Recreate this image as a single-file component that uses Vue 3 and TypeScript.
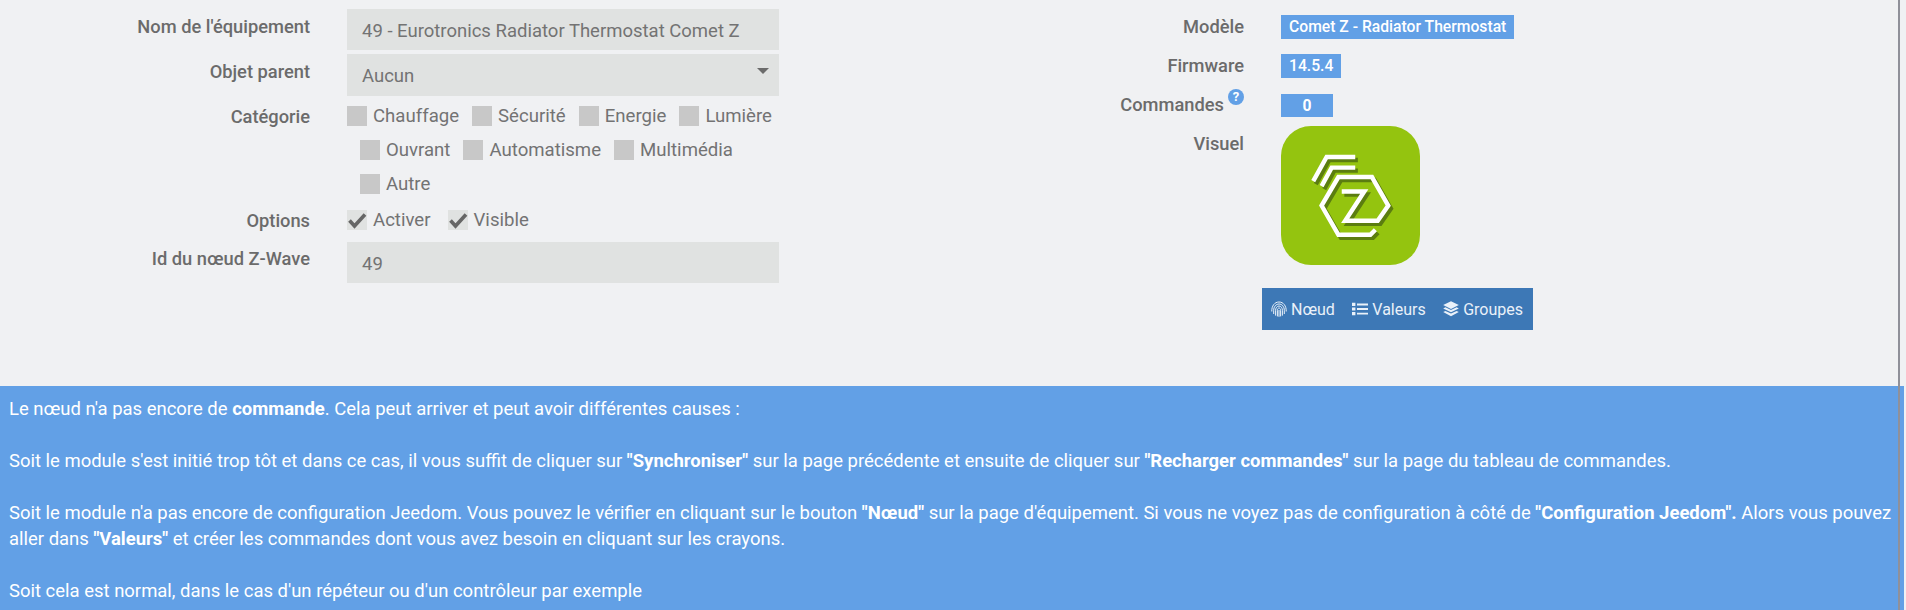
<script setup lang="ts">
const catRows: string[][] = [
  ['Chauffage', 'Sécurité', 'Energie', 'Lumière'],
  ['Ouvrant', 'Automatisme', 'Multimédia'],
  ['Autre'],
];
const options = ['Activer', 'Visible'];
</script>

<template>
  <div class="page">
    <div class="top">
      <form class="left" @submit.prevent>
        <div class="row row-input">
          <label>Nom de l'équipement</label>
          <div class="field">49 - Eurotronics Radiator Thermostat Comet Z</div>
        </div>
        <div class="row row-select">
          <label>Objet parent</label>
          <div class="field select">
            Aucun
            <span class="caret"></span>
          </div>
        </div>
        <div class="row row-check">
          <label>Catégorie</label>
          <div class="cats">
            <div v-for="(cats, i) in catRows" :key="i" class="cat-row" :class="{ indented: i > 0 }">
              <span v-for="c in cats" :key="c" class="check">
                <span class="box"></span>{{ c }}
              </span>
            </div>
          </div>
        </div>
        <div class="row row-options">
          <label>Options</label>
          <div class="cat-row opts">
            <span v-for="o in options" :key="o" class="check">
              <span class="box on">
                <svg viewBox="0 0 20 20" width="20" height="20">
                  <path d="M2.5 10.5l5 5.5L18 4.5" fill="none" stroke="#666" stroke-width="3.6" />
                </svg>
              </span>{{ o }}
            </span>
          </div>
        </div>
        <div class="row row-id">
          <label>Id du nœud Z-Wave</label>
          <div class="field">49</div>
        </div>
      </form>

      <div class="right">
        <div class="info">
          <label>Modèle</label>
          <span class="badge">Comet Z - Radiator Thermostat</span>
        </div>
        <div class="info">
          <label>Firmware</label>
          <span class="badge">14.5.4</span>
        </div>
        <div class="info info-cmd">
          <label>
            Commandes
            <span class="help">?</span>
          </label>
          <span class="badge badge-zero">0</span>
        </div>
        <div class="info info-visual">
          <label>Visuel</label>
          <div class="logo">
            <svg viewBox="0 0 138 138" width="139" height="139">
              <g fill="none" stroke-width="4.4" stroke-linejoin="miter">
                <g stroke="#5b7d10" transform="translate(2.6 3)">
                  <path d="M60.3 65H82.7L63.7 94H96L106.5 79L90.3 50.7H57L40.3 79L57 108H88.7L93.7 103" />
                  <path d="M32 54.7L45.3 30.7H73.7M40.3 59.7L50.3 41.3H73.7" />
                </g>
                <g stroke="#fff">
                  <path d="M60.3 65H82.7L63.7 94H96L106.5 79L90.3 50.7H57L40.3 79L57 108H88.7L93.7 103" />
                  <path d="M32 54.7L45.3 30.7H73.7M40.3 59.7L50.3 41.3H73.7" />
                </g>
              </g>
            </svg>
          </div>
        </div>
        <div class="btns">
          <span class="btn">
            <svg viewBox="0 0 16 16" width="16" height="16" fill="none" stroke="#eaf1f9" stroke-width="1">
              <path d="M.8 10.5C.5 5 3.6 1 8 1s7.5 4 7.2 9.5" />
              <path d="M2.7 13V9.3C2.7 5.8 5 3 8 3s5.3 2.8 5.3 6.3V13" />
              <path d="M4.6 14.6V9.3C4.6 6.9 6.1 5 8 5s3.4 1.9 3.4 4.3v5.3" />
              <path d="M6.4 15.4V9.3C6.4 8 7.1 7 8 7s1.6 1 1.6 2.3v6.1" />
              <path d="M8 9v6.8" />
            </svg>
            Nœud
          </span>
          <span class="btn">
            <svg viewBox="0 0 16 16" width="16" height="16" fill="#eaf1f9">
              <path d="M0 1.8h3.4v3.2H0zM0 6.4h3.4v3.2H0zM0 11h3.4v3.2H0zM5 2.5h11v1.9H5zM5 7.1h11V9H5zM5 11.7h11v1.9H5z" />
            </svg>
            Valeurs
          </span>
          <span class="btn">
            <svg viewBox="0 0 16 16" width="16" height="16" fill="#eaf1f9">
              <path d="M8 .3l7.8 3.8L8 7.9.2 4.1z" />
              <path d="M2.4 6.3L8 9l5.6-2.7 2.2 1.1L8 11.2.2 7.4z" />
              <path d="M2.4 9.9L8 12.6l5.6-2.7 2.2 1.1L8 15.2.2 11z" />
            </svg>
            Groupes
          </span>
        </div>
      </div>
    </div>

    <div class="notice">
      <p>Le nœud n'a pas encore de <b>commande</b>. Cela peut arriver et peut avoir différentes causes :</p>
      <p>Soit le module s'est initié trop tôt et dans ce cas, il vous suffit de cliquer sur <b>"Synchroniser"</b> sur la page précédente et ensuite de cliquer sur <b>"Recharger commandes"</b> sur la page du tableau de commandes.</p>
      <p>Soit le module n'a pas encore de configuration Jeedom. Vous pouvez le vérifier en cliquant sur le bouton <b>"Nœud"</b> sur la page d'équipement. Si vous ne voyez pas de configuration à côté de <b>"Configuration Jeedom".</b> Alors vous pouvez aller dans <b>"Valeurs"</b> et créer les commandes dont vous avez besoin en cliquant sur les crayons.</p>
      <p>Soit cela est normal, dans le cas d'un répéteur ou d'un contrôleur par exemple</p>
    </div>

    <div class="edge"></div>
  </div>
</template>

<style>
html,
body {
  background: #f0f1f3;
  overflow: hidden;
}
</style>

<style scoped>
.page {
  position: relative;
  width: 1906px;
  height: 610px;
  overflow: hidden;
  font-family: Roboto, sans-serif;
  background: #f0f1f3;
  color: #6b6b6b;
}

.top {
  display: flex;
  height: 386px;
}

.left {
  width: 779px;
  padding-top: 9px;
  box-sizing: border-box;
}

.row {
  display: grid;
  grid-template-columns: 310px 432px;
  column-gap: 37px;
}

.row label {
  text-align: right;
  font-size: 18.3px;
  font-weight: 500;
  line-height: 24px;
}

.row-input {
  margin-bottom: 4px;
}

.row-input label {
  padding-top: 6px;
}

.row-select {
  margin-bottom: 10px;
}

.row-select label {
  padding-top: 6px;
}

.row-check {
  margin-bottom: 16px;
}

.row-options {
  margin-bottom: 10px;
}

.row-check label,
.row-options label {
  line-height: 22px;
}

.row-id label {
  padding-top: 5px;
}

.field {
  background: #e0e2e1;
  height: 41px;
  line-height: 44px;
  padding-left: 15px;
  font-size: 18.5px;
  color: #737373;
  box-sizing: border-box;
}

.select {
  position: relative;
  height: 42px;
  line-height: 44px;
}

.caret {
  position: absolute;
  right: 10px;
  top: 14px;
  border-left: 6px solid transparent;
  border-right: 6px solid transparent;
  border-top: 6px solid #6b6b6b;
}

.cats {
  display: flex;
  flex-direction: column;
  row-gap: 14px;
}

.cat-row {
  display: flex;
  column-gap: 13px;
}

.opts {
  column-gap: 17px;
}

.indented {
  padding-left: 13px;
}

.check {
  display: flex;
  align-items: center;
  height: 20px;
  font-size: 18.6px;
  color: #737373;
  white-space: nowrap;
}

.box {
  width: 20px;
  height: 20px;
  margin-right: 6px;
  background: #c8c8c8;
  display: block;
}

.box.on {
  background: #e0e2e1;
}

.box svg {
  display: block;
}

.right {
  margin-left: 0;
  padding-top: 15px;
  display: flex;
  flex-direction: column;
  align-items: flex-start;
}

.info {
  display: grid;
  grid-template-columns: 465px auto;
  column-gap: 37px;
  height: 39px;
}

.info label {
  position: relative;
  text-align: right;
  font-size: 18.3px;
  font-weight: 500;
  line-height: 24px;
}

.info-cmd {
  height: 32px;
  margin-top: 1px;
}

.info-cmd label {
  padding-right: 20px;
  margin-top: -1px;
  box-sizing: border-box;
}

.help {
  position: absolute;
  right: 0;
  top: -4px;
  width: 16px;
  height: 16px;
  border-radius: 50%;
  background: #62a0e6;
  color: #fff;
  font-size: 13px;
  font-weight: 700;
  line-height: 16px;
  text-align: center;
}

.badge {
  justify-self: start;
  height: 24px;
  line-height: 24px;
  padding: 0 8px;
  background: #62a0e6;
  color: #fff;
  font-size: 15.7px;
  font-weight: 500;
}

.badge-zero {
  width: 52px;
  height: 23px;
  padding: 0;
  text-align: center;
  font-weight: 700;
}

.info-visual {
  height: 139px;
}

.info-visual label {
  margin-top: 6px;
}

.logo {
  width: 139px;
  height: 139px;
  border-radius: 30px;
  background: #94c40f;
}

.logo svg {
  display: block;
}

.btns {
  margin: 23px 0 0 483px;
  width: 271px;
  height: 42px;
  background: #3d78b6;
  display: flex;
  align-items: center;
  padding-left: 9px;
  column-gap: 17.5px;
  box-sizing: border-box;
}

.btn {
  display: flex;
  align-items: center;
  column-gap: 4px;
  color: #eaf1f9;
  font-size: 16px;
}

.notice {
  width: 1904px;
  height: 224px;
  padding: 10px 8px 0 9px;
  box-sizing: border-box;
  background: #62a0e6;
  color: #fff;
  font-size: 18.48px;
  line-height: 26px;
}

.notice p {
  margin: 0 0 26px;
}

.notice b {
  font-weight: 700;
}

.edge {
  position: absolute;
  top: 0;
  bottom: 0;
  left: 1898px;
  width: 2px;
  background: #8f9099;
}
</style>
